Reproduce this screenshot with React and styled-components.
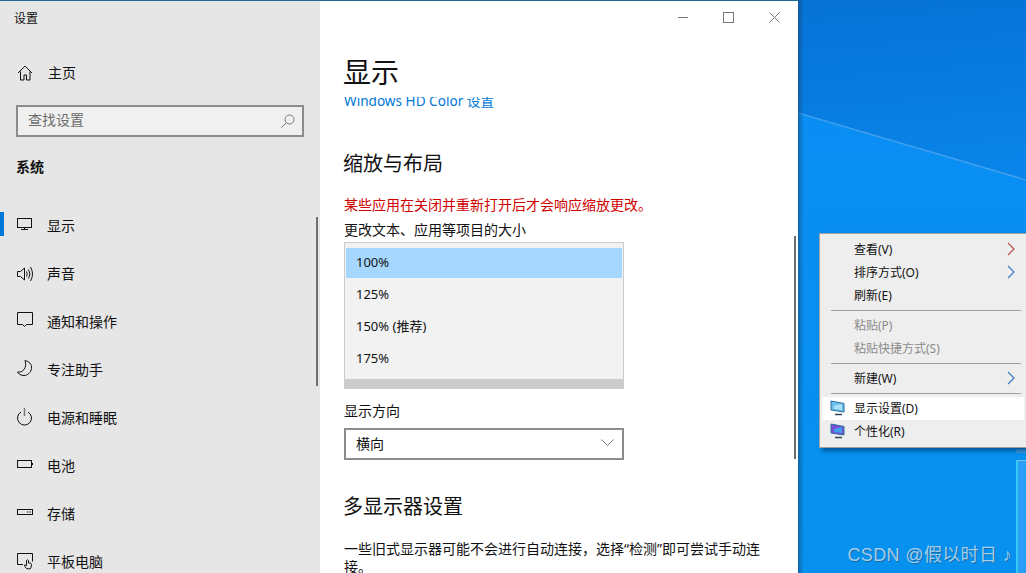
import React from 'react'
import styled, { createGlobalStyle } from 'styled-components'

const FONT = '"Noto Sans", "Noto Sans CJK SC", sans-serif'

const Line = ({ children, w = 22, h = 22 }) => (
  <svg width={w} height={h} viewBox={`0 0 ${w} ${h}`} fill="none" stroke="#111" strokeWidth="1">
    {children}
  </svg>
)

const navItems = [
  { label: '显示', active: true, icon: <><rect x="1.500" y="3.500" width="14" height="9" /><path d="M8.500 12.500v2M5 14.500h7" /></> },
  { label: '声音', icon: <><path d="M1.500 8.500v5h3l4 3.500V5l-4 3.500z" /><path d="M10.500 8.500q1.500 2.500 0 5M12.500 6.500q3 4.500 0 9M14.500 4q4 7 0 14" /></> },
  { label: '通知和操作', icon: <path d="M1.500 1.500h15v12h-6l-2 2-2-2h-5z" /> },
  { label: '专注助手', icon: <path d="M9 1.500c4 1 7 3.500 6.500 8-.5 4-4 7-7.500 7-3 0-5.500-1.500-6.500-3.500 5 1 10-4 7.500-11.500z" /> },
  { label: '电源和睡眠', icon: <><path d="M8.500 1v8" stroke="#777" strokeWidth="1.500" /><path d="M5 5a7 7 0 1 0 7 0" /></> },
  { label: '电池', icon: <><rect x="1.500" y="5.500" width="14" height="7" /><path d="M16.500 8v2" /></> },
  { label: '存储', icon: <><rect x="1.500" y="6.500" width="15" height="5" /><path d="M11 9h1.500M13.500 9H15" /></> },
  { label: '平板电脑', icon: <><path d="M7 13.500H1.500v-11h15v8" /><path d="M10.500 17.500q-2-2-2-3.500l2 .5v-5q1.250-1.500 2 0v2.500q3-.5 3 1.500 0 3-1.500 4.500z" /></> },
]

const contextItems = [
  { label: '查看(V)', arrow: '#b5534a' },
  { label: '排序方式(O)', arrow: '#3a7cc0' },
  { label: '刷新(E)' },
  { divider: true },
  { label: '粘贴(P)', disabled: true },
  { label: '粘贴快捷方式(S)', disabled: true },
  { divider: true },
  { label: '新建(W)', arrow: '#3a7cc0' },
  { divider: true },
  { label: '显示设置(D)', hover: true, screen: '#6cc0ec', tint: '#a8e0f8' },
  { label: '个性化(R)', screen: '#7a4fd8', tint: '#3f9fe8' },
]

const App = () => {
  return (
    <>
      <GlobalStyle />
      <Screen>
        <Sidebar>
          <WindowTitle>设置</WindowTitle>
          <HomeRow>
            <Line>
              <path d="M2 11 9 4l7 7M4.500 9.500v8.500h3.500v-5h2.500v5H14V9.500" />
            </Line>
            <span>主页</span>
          </HomeRow>
          <SearchBox>
            <SearchText>查找设置</SearchText>
            <svg width="16" height="16" viewBox="0 0 16 16" fill="none" stroke="#777" strokeWidth="1">
              <circle cx="9.500" cy="6.500" r="4.500" />
              <path d="M6 10l-4.500 4.500" />
            </svg>
          </SearchBox>
          <GroupLabel>系统</GroupLabel>
          <NavList>
            {navItems.map(item => (
              <NavRow key={item.label} $active={item.active}>
                <Line w={18} h={20}>{item.icon}</Line>
                <span>{item.label}</span>
              </NavRow>
            ))}
          </NavList>
          <SideScroll />
        </Sidebar>

        <Content>
          <WindowControls>
            <svg width="11" height="11" viewBox="0 0 11 11" stroke="#777" fill="none"><path d="M1 5.500h10" /></svg>
            <svg width="11" height="11" viewBox="0 0 11 11" stroke="#777" fill="none"><rect x=".5" y=".5" width="10" height="10" /></svg>
            <svg width="11" height="11" viewBox="0 0 11 11" stroke="#777" fill="none"><path d="M.5.500l10 10M10.500.500l-10 10" /></svg>
          </WindowControls>
          <PageTitle>显示</PageTitle>
          <ClippedLink><span>Windows HD Color 设置</span></ClippedLink>
          <SectionTitle>缩放与布局</SectionTitle>
          <Warning>某些应用在关闭并重新打开后才会响应缩放更改。</Warning>
          <FieldLabel>更改文本、应用等项目的大小</FieldLabel>
          <ScaleList>
            <ScaleOption $selected>100%</ScaleOption>
            <ScaleOption>125%</ScaleOption>
            <ScaleOption>150% (推荐)</ScaleOption>
            <ScaleOption>175%</ScaleOption>
            <ScaleFooter />
          </ScaleList>
          <OrientationLabel>显示方向</OrientationLabel>
          <Select>
            <span>横向</span>
            <svg width="13" height="8" viewBox="0 0 13 8" fill="none" stroke="#777"><path d="M.5.500l6 6 6-6" /></svg>
          </Select>
          <MultiTitle>多显示器设置</MultiTitle>
          <Paragraph>一些旧式显示器可能不会进行自动连接，选择“检测”即可尝试手动连接。</Paragraph>
          <ContentScroll />
        </Content>

        <Desktop>
          <Wallpaper viewBox="0 0 228 573" preserveAspectRatio="none">
            <defs>
              <linearGradient id="sky" x1="0" y1="0" x2="0.1" y2="1">
                <stop offset="0" stopColor="#0672d6" />
                <stop offset="1" stopColor="#0984e8" />
              </linearGradient>
              <linearGradient id="low" x1="0" y1="0" x2="0" y2="1">
                <stop offset="0" stopColor="#0a8df5" />
                <stop offset="1" stopColor="#0791ee" />
              </linearGradient>
            </defs>
            <rect width="228" height="573" fill="url(#low)" />
            <polygon points="0,0 228,0 228,180 0,113" fill="url(#sky)" />
            <line x1="0" y1="113" x2="228" y2="180" stroke="#3f9fee" strokeWidth="1.500" />
          </Wallpaper>
          <WindowShadow />
          <CornerTile />
          <ContextMenu>
            {contextItems.map((item, i) => item.divider ? <MenuDivider key={i} /> : (
              <MenuRow key={item.label} $hover={item.hover} $disabled={item.disabled}>
                {item.screen && (
                  <MenuIcon viewBox="0 0 15 16">
                    <polygon points="1,1 14,3.500 14,12 1,10" fill={item.screen} stroke="#2a6f9c" />
                    <polygon points="4,6 12,4 12,10 4,9" fill={item.tint} />
                    <path d="M5 14.500h7" stroke="#345" strokeWidth="1.500" />
                  </MenuIcon>
                )}
                <span>{item.label}</span>
                {item.arrow && (
                  <MenuArrow viewBox="0 0 8 14" fill="none" stroke={item.arrow} strokeWidth="1.200">
                    <path d="M1 1l6 6-6 6" />
                  </MenuArrow>
                )}
              </MenuRow>
            ))}
          </ContextMenu>
          <Watermark>CSDN @假以时日 ♪</Watermark>
        </Desktop>
      </Screen>
    </>
  )
}

const GlobalStyle = createGlobalStyle`
  html, body {
    margin: 0;
    padding: 0;
    overflow: hidden;
    font-family: ${FONT};
  }
`
const Screen = styled.div`
  display: flex;
  width: 1026px;
  height: 573px;
  overflow: hidden;
  color: #111;
  font-size: 14px;
`
const Sidebar = styled.aside`
  position: relative;
  box-sizing: border-box;
  width: 320px;
  height: 573px;
  flex: none;
  overflow: hidden;
  background: #e6e6e6;
  border-top: 1px solid #1d6a96;
`
const WindowTitle = styled.div`
  padding: 9px 0 0 14px;
  font-size: 12px;
  line-height: 17px;
`
const HomeRow = styled.div`
  display: flex;
  align-items: center;
  gap: 10px;
  margin-top: 35px;
  padding-left: 16px;
  height: 22px;
  line-height: 22px;
`
const SearchBox = styled.div`
  box-sizing: border-box;
  display: flex;
  align-items: center;
  justify-content: space-between;
  width: 288px;
  height: 32px;
  margin: 21px 0 0 16px;
  padding: 0 6px 0 10px;
  background: #f0f0f0;
  border: 2px solid #8c8c8c;
  color: #6d6d6d;
`
const SearchText = styled.span`
  padding-bottom: 5px;
`
const GroupLabel = styled.div`
  margin: 20px 0 0 16px;
  font-weight: 700;
  line-height: 20px;
`
const NavList = styled.nav`
  display: flex;
  flex-direction: column;
  margin-top: 24px;
`
const NavRow = styled.div`
  position: relative;
  display: flex;
  align-items: center;
  gap: 13px;
  height: 48px;
  padding-left: 16px;
  &::before {
    content: '';
    display: ${p => (p.$active ? 'block' : 'none')};
    position: absolute;
    left: 0;
    top: 11px;
    width: 4px;
    height: 24px;
    background: #0078d7;
  }
`
const SideScroll = styled.div`
  position: absolute;
  left: 316px;
  top: 216px;
  width: 2px;
  height: 169px;
  background: #6f6f6f;
`
const Content = styled.main`
  position: relative;
  box-sizing: border-box;
  width: 478px;
  height: 573px;
  flex: none;
  overflow: hidden;
  padding-left: 24px;
  background: #fff;
  border-top: 1px solid #1d6a96;
`
const WindowControls = styled.div`
  display: flex;
  justify-content: flex-end;
  gap: 35px;
  height: 34px;
  padding: 11px 18px 0 0;
  box-sizing: border-box;
`
const PageTitle = styled.h1`
  margin: 18px 0 0 -1px;
  font-size: 28px;
  font-weight: 400;
  line-height: 38px;
`
const ClippedLink = styled.div`
  height: 16px;
  overflow: hidden;
  margin-top: 6px;
  color: #0078d7;
  font-size: 13.6px;
  line-height: 22px;
  span {
    display: block;
    margin-top: -7px;
  }
`
const SectionTitle = styled.h2`
  margin: 37px 0 0 -1px;
  font-size: 20px;
  font-weight: 400;
  line-height: 28px;
`
const Warning = styled.div`
  margin-top: 18px;
  color: #d00000;
  line-height: 18px;
`
const FieldLabel = styled.div`
  margin-top: 7px;
  line-height: 18px;
`
const ScaleList = styled.div`
  box-sizing: border-box;
  width: 280px;
  height: 147px;
  margin-top: 3px;
  padding: 5px 1px 0;
  background: #f2f2f2;
  border: 1px solid #cccccc;
  border-bottom: 0;
  display: flex;
  flex-direction: column;
`
const ScaleOption = styled.div`
  flex: none;
  height: ${p => (p.$selected ? '30px' : '32px')};
  line-height: ${p => (p.$selected ? '28px' : '32px')};
  padding-left: 10px;
  background: ${p => (p.$selected ? '#a6d8ff' : 'transparent')};
  font-size: 13px;
`
const ScaleFooter = styled.div`
  height: 10px;
  margin: auto -1px 0;
  background: #cccccc;
`
const OrientationLabel = styled.div`
  margin-top: 13px;
  line-height: 18px;
`
const Select = styled.div`
  box-sizing: border-box;
  display: flex;
  align-items: center;
  justify-content: space-between;
  width: 280px;
  height: 32px;
  margin-top: 8px;
  padding: 0 8px 2px 10px;
  border: 2px solid #8c8c8c;
  background: #fff;
`
const MultiTitle = styled.h2`
  margin: 33px 0 0 -1px;
  font-size: 20px;
  font-weight: 400;
  line-height: 28px;
`
const Paragraph = styled.p`
  width: 424px;
  margin: 19px 0 0;
  line-height: 18px;
`
const ContentScroll = styled.div`
  position: absolute;
  left: 474px;
  top: 235px;
  width: 2px;
  height: 223px;
  background: #6f6f6f;
`
const Desktop = styled.div`
  position: relative;
  flex: 1;
  height: 573px;
  overflow: hidden;
  background: #0a8bf2;
`
const Wallpaper = styled.svg`
  position: absolute;
  inset: 0;
  width: 100%;
  height: 100%;
`
const WindowShadow = styled.div`
  position: absolute;
  left: 0;
  top: 0;
  width: 6px;
  height: 100%;
  background: linear-gradient(90deg, rgba(20, 70, 110, .55), rgba(20, 70, 110, 0));
`
const CornerTile = styled.div`
  position: absolute;
  right: 0;
  top: 460px;
  width: 10px;
  height: 113px;
  box-sizing: border-box;
  background: #2a9ff7;
  border-left: 2px solid #35c8f5;
  border-top: 1px solid #6cc5f5;
  &::before {
    content: '';
    position: absolute;
    left: -2px;
    top: -12px;
    width: 10px;
    height: 4px;
    background: #3a9ce0;
  }
`
const ContextMenu = styled.div`
  position: absolute;
  left: 21px;
  top: 233px;
  box-sizing: border-box;
  width: 207px;
  height: 215px;
  padding: 4px 2px;
  background: #eeeeee;
  border: 1px solid #a0a0a0;
  border-right: 0;
  box-shadow: 3px 3px 4px rgba(0, 40, 90, .55);
  font-size: 12px;
`
const MenuRow = styled.div`
  position: relative;
  box-sizing: border-box;
  display: flex;
  align-items: center;
  height: 23px;
  padding: 0 0 2px 32px;
  background: ${p => (p.$hover ? '#fff' : 'transparent')};
  color: ${p => (p.$disabled ? '#8a8a8a' : '#111')};
`
const MenuDivider = styled.div`
  height: 1px;
  margin: 3px 3px 3px 9px;
  background: #a0a0a0;
`
const MenuIcon = styled.svg`
  position: absolute;
  left: 8px;
  top: 3px;
  width: 15px;
  height: 16px;
`
const MenuArrow = styled.svg`
  position: absolute;
  right: 9px;
  top: 4px;
  width: 8px;
  height: 14px;
`
const Watermark = styled.div`
  position: absolute;
  right: 14px;
  bottom: 7px;
  color: rgba(205, 225, 240, .8);
  font-family: "Liberation Sans", "Noto Sans CJK SC", sans-serif;
  font-size: 18px;
  letter-spacing: .35px;
  line-height: 22px;
  white-space: nowrap;
  text-shadow: 1px 1px 0 rgba(30, 90, 140, .7);
`

export default App
